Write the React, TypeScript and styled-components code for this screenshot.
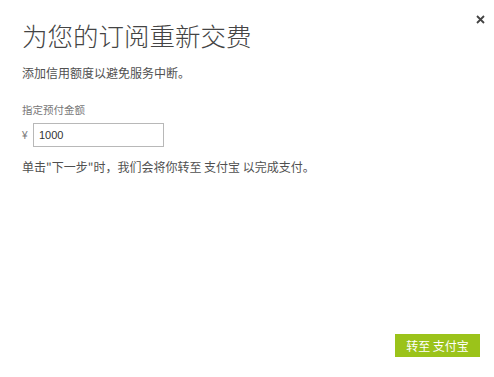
import styled, { createGlobalStyle } from 'styled-components';

const Global = createGlobalStyle`
  html, body { margin: 0; padding: 0; background: #fff; }
  body { font-family: "Noto Sans CJK SC", "Noto Sans", sans-serif; }
`;

const Dialog = styled.div`
  position: relative;
  width: 494px;
  height: 377px;
  box-sizing: border-box;
  padding: 18px 14px 20px 22px;
  display: flex;
  flex-direction: column;
  background: #fff;
`;

const Close = styled.button`
  position: absolute;
  top: 12px;
  right: 7px;
  width: 14px;
  height: 14px;
  padding: 0;
  border: 0;
  background: none;
  display: flex;
  align-items: center;
  justify-content: center;
`;

const Title = styled.h1`
  margin: 0;
  font-size: 25.5px;
  line-height: 33px;
  font-weight: 300;
  color: #444;
  font-family: "Noto Sans CJK SC", sans-serif;
`;

const Text = styled.p<{ $top: number }>`
  margin: ${p => p.$top}px 0 0;
  font-size: 12px;
  line-height: 16px;
  color: #505050;
  font-family: "Noto Sans CJK SC", sans-serif;
`;

const Label = styled.label`
  display: block;
  margin-top: 22px;
  font-size: 10.5px;
  line-height: 14px;
  color: #777;
  font-family: "Noto Sans CJK SC", sans-serif;
`;

const AmountRow = styled.div`
  display: flex;
  align-items: center;
  gap: 4px;
  margin-top: 6px;
`;

const Currency = styled.span`
  font-size: 10px;
  color: #777;
  width: 7px;
  font-family: "Liberation Sans", sans-serif;
`;

const Input = styled.input`
  width: 131px;
  height: 24px;
  box-sizing: border-box;
  border: 1px solid #b8b8b8;
  padding: 0 5px;
  font-size: 11px;
  color: #333;
  font-family: "Liberation Sans", sans-serif;
  outline: none;
`;

const Footer = styled.div`
  margin-top: auto;
  display: flex;
  justify-content: flex-end;
`;

const Primary = styled.button`
  width: 85px;
  height: 23px;
  border: 0;
  padding: 0;
  background: #9bc31a;
  color: #fff;
  font-size: 12px;
  font-family: "Noto Sans CJK SC", sans-serif;
`;

export default function App() {
  return (
    <Dialog>
      <Global />
      <Close aria-label="关闭">
        <svg width="9" height="9" viewBox="0 0 9 9">
          <path d="M1 1L8 8M8 1L1 8" stroke="#444" strokeWidth="1.8" />
        </svg>
      </Close>
      <Title>为您的订阅重新交费</Title>
      <Text $top={14}>添加信用额度以避免服务中断。</Text>
      <Label>指定预付金额</Label>
      <AmountRow>
        <Currency>¥</Currency>
        <Input defaultValue="1000" />
      </AmountRow>
      <Text $top={12}>单击"下一步"时，我们会将你转至 支付宝 以完成支付。</Text>
      <Footer>
        <Primary>转至 支付宝</Primary>
      </Footer>
    </Dialog>
  );
}
